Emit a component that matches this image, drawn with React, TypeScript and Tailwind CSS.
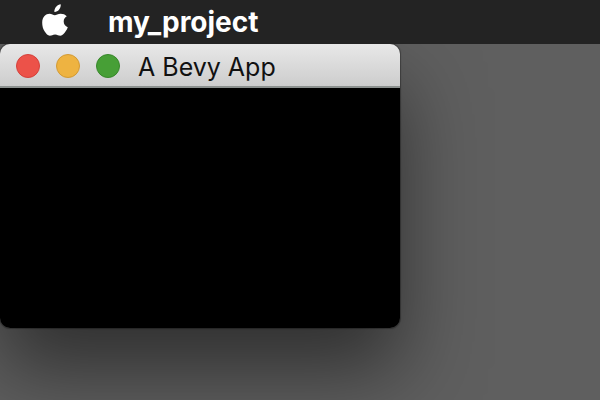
function AppleLogo() {
  return (
    <svg viewBox="0 0 26 33" className="h-[33px] w-[26px]" fill="#fff" aria-hidden="true">
      <path d="M18.7 0.300c0.300 2-0.500 4-1.700 5.500-1.200 1.400-2.900 2.300-4.600 2.200-0.200-1.900 0.600-3.900 1.800-5.200C15.300 1.400 17.200 0.400 18.700 0.300z" />
      <path d="M24.800 12.200c-2 1.200-3.100 2.900-3.100 5.200 0 2.700 1.600 4.800 4.100 5.800-0.500 1.500-1.300 3-2.300 4.400-1.400 2.100-2.900 4.100-5.100 4.100-2.200 0-2.800-1.300-5.300-1.300-2.500 0-3.300 1.300-5.300 1.300-2.100 0-3.600-1.900-5.100-4.100C1 25 0.200 21.900 0.200 18.700c0-5.800 3.700-8.900 7.300-8.900 2.100 0 3.900 1.400 5.300 1.400 1.300 0 3.300-1.500 5.800-1.500 2.400 0 4.700 0.800 6.200 2.500z" />
    </svg>
  );
}

function MenuBar() {
  return (
    <header className="flex h-11 items-center bg-[#232323] pl-[42px] text-white">
      <button type="button" aria-label="Apple menu" className="mb-1">
        <AppleLogo />
      </button>
      <button type="button" className="ml-10 text-[28px] leading-8 font-bold">
        my_project
      </button>
    </header>
  );
}

function TitleBar() {
  return (
    <div className="flex h-11 items-center border-b-2 border-[#8c918f] bg-linear-to-b from-[#e8e8e8] to-[#cdcdcd] pt-0.5 pl-4">
      <div className="flex gap-4">
        <button type="button" aria-label="Close" className="size-6 rounded-full border border-[#d4413b] bg-[#ec5249]" />
        <button type="button" aria-label="Minimize" className="size-6 rounded-full border border-[#d29a35] bg-[#eeb341]" />
        <button type="button" aria-label="Zoom" className="size-6 rounded-full border border-[#38872b] bg-[#479f36]" />
      </div>
      <h1 className="ml-[18px] pt-0.5 text-[25px] leading-8 text-[#111]">A Bevy App</h1>
    </div>
  );
}

export default function App() {
  return (
    <div className="flex min-h-screen flex-col bg-[#5f5f5f] font-['Inter',sans-serif]">
      <MenuBar />
      <main className="flex-1 overflow-hidden">
        <section
          aria-label="A Bevy App"
          className="w-2/3 rounded-[10px] shadow-[0_0_1px_1px_rgba(0,0,0,0.3),0_42px_80px_rgba(0,0,0,0.5)]"
        >
          <div className="overflow-hidden rounded-[10px]">
            <TitleBar />
            <div className="h-60 bg-black" />
          </div>
        </section>
      </main>
    </div>
  );
}
